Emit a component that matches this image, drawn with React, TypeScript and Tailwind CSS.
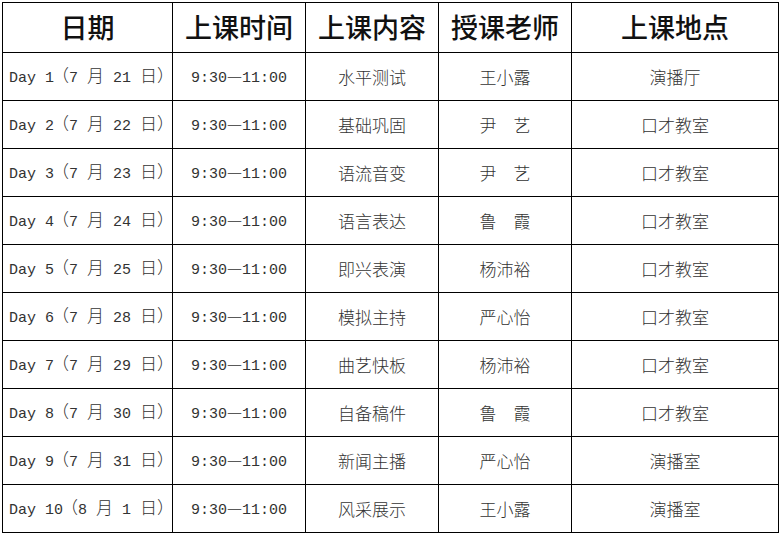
const HEADERS = ["日期", "上课时间", "上课内容", "授课老师", "上课地点"];

const ROWS: [string, string, string, string][] = [
	["Day 1（7 月 21 日）", "水平测试", "王小露", "演播厅"],
	["Day 2（7 月 22 日）", "基础巩固", "尹　艺", "口才教室"],
	["Day 3（7 月 23 日）", "语流音变", "尹　艺", "口才教室"],
	["Day 4（7 月 24 日）", "语言表达", "鲁　霞", "口才教室"],
	["Day 5（7 月 25 日）", "即兴表演", "杨沛裕", "口才教室"],
	["Day 6（7 月 28 日）", "模拟主持", "严心怡", "口才教室"],
	["Day 7（7 月 29 日）", "曲艺快板", "杨沛裕", "口才教室"],
	["Day 8（7 月 30 日）", "自备稿件", "鲁　霞", "口才教室"],
	["Day 9（7 月 31 日）", "新闻主播", "严心怡", "演播室"],
	["Day 10（8 月 1 日）", "风采展示", "王小露", "演播室"],
];

const TIME = "9:30—11:00";

const CJK = /[\u3000-\u9fff\uff00-\uffef—]/;

// latin runs in a mono face (half width), CJK / full width chars in the CJK face
function Mixed({ text }: { text: string }) {
	const parts = text.match(/[\u3000-\u9fff\uff00-\uffef—]|[^\u3000-\u9fff\uff00-\uffef—]+/g) || [];
	return (
		<span className="whitespace-pre">
			{parts.map((p, i) => {
				if (!CJK.test(p)) {
					return (
						<span key={i} className="font-['Liberation_Mono',monospace] text-[15px]">
							{p}
						</span>
					);
				}
				if (p === "（") {
					return (
						<span key={i} className="ml-[-2px] font-['Noto_Sans_CJK_SC',sans-serif] text-[17px] font-light">
							{p}
						</span>
					);
				}
				if (p === "）") {
					return (
						<span key={i} className="mr-[-4px] font-['Noto_Sans_CJK_SC',sans-serif] text-[17px] font-light">
							{p}
						</span>
					);
				}
				return (
					<span key={i} className="font-['Noto_Sans_CJK_SC',sans-serif] text-[17px] font-light">
						{p}
					</span>
				);
			})}
		</span>
	);
}

export default function App() {
	return (
		<div className="h-[536px] w-[782px] bg-white pl-[2px] pt-[2px]">
			<div className="grid w-fit grid-cols-[169px_132px_132px_132px_206px] grid-rows-[49px_repeat(10,47px)] gap-px bg-black p-px">
				{HEADERS.map((h) => (
					<div
						key={h}
						className="flex items-center justify-center bg-white font-['Noto_Sans_CJK_SC',sans-serif] text-[27px] font-medium text-[#111]"
					>
						{h}
					</div>
				))}
				{ROWS.map(([day, course, teacher, place]) => (
					<div key={day} className="contents">
						<div className="flex items-center bg-white pl-[6px] text-[#333]">
							<Mixed text={day} />
						</div>
						<div className="flex items-center justify-center bg-white text-[#333]">
							<Mixed text={TIME} />
						</div>
						<div className="flex items-center justify-center bg-white font-['Noto_Sans_CJK_SC',sans-serif] text-[17px] font-light text-[#333]">
							{course}
						</div>
						<div className="flex items-center justify-center bg-white font-['Noto_Sans_CJK_SC',sans-serif] text-[17px] font-light text-[#333]">
							{teacher}
						</div>
						<div className="flex items-center justify-center bg-white font-['Noto_Sans_CJK_SC',sans-serif] text-[17px] font-light text-[#333]">
							{place}
						</div>
					</div>
				))}
			</div>
		</div>
	);
}
